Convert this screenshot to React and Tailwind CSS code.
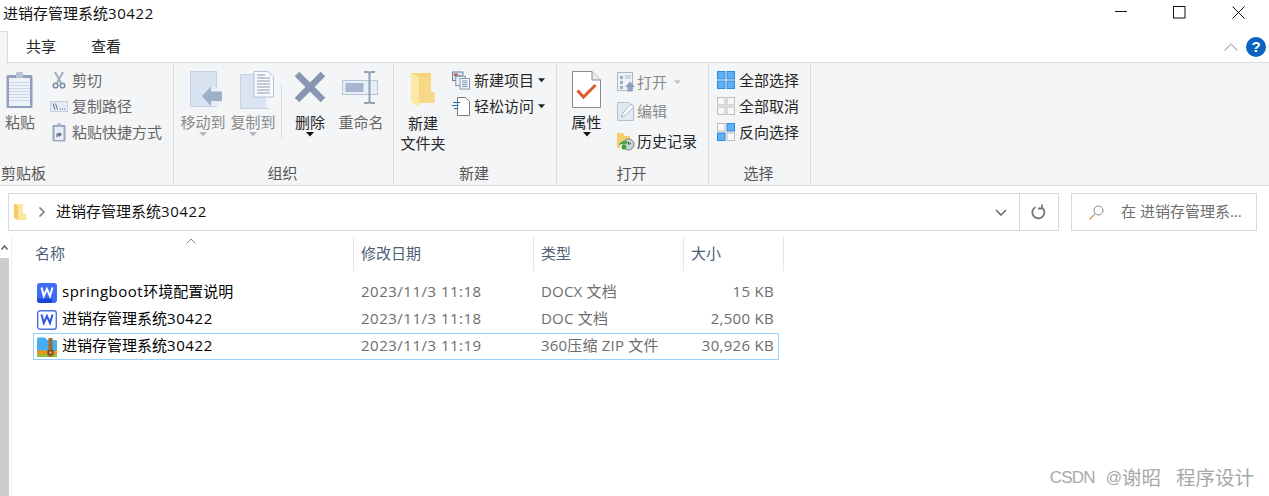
import React from "react";

const font = { fontFamily: '"Open Sans","Noto Sans CJK SC",sans-serif' };

const Caret = ({ c = "#222", w = 8 }) => (
  <svg width={w} height="5" viewBox="0 0 8 5" className="shrink-0"><path d="M0 0H8L4 4.5Z" fill={c} /></svg>
);

const BigBtn = ({ w, icon, label, dark, caret, gray, ml = 0, iconMl = 0 }) => (
  <div className="flex flex-col items-center shrink-0" style={{ width: w, marginLeft: ml }}>
    <div className="h-[40px] flex items-start justify-center" style={{ marginLeft: iconMl }}>{icon}</div>
    <div className={"h-[22px] leading-[22px] whitespace-nowrap " + (dark ? "text-[#262626]" : gray ? "text-[#8a8a8a]" : "text-[#666]")}>{label}</div>
    {caret && <div className="-mt-[1px]"><Caret c={dark ? "#111" : "#b5b8bd"} /></div>}
  </div>
);

const SmallBtn = ({ icon, label, h = 26, gap = 4, iw = 18, cls = "text-[#666]", extra }) => (
  <div className="flex items-center shrink-0" style={{ height: h }}>
    <div className="flex items-center justify-center shrink-0" style={{ width: iw, marginRight: gap }}>{icon}</div>
    <span className={"whitespace-nowrap leading-none " + cls}>{label}</span>
    {extra}
  </div>
);

const Group = ({ w, label, children, left }) => (
  <div className="flex flex-col shrink-0 border-r border-[#dcdddf] h-full" style={{ width: w }}>
    <div className="flex-1 flex items-start pt-[8px] min-h-0">{children}</div>
    <div className={"h-[22px] leading-[20px] text-[#555] " + (left ? "pl-[1px]" : "text-center pr-[2px]")}>{label}</div>
  </div>
);

const PasteIcon = () => (
  <svg width="30" height="38" viewBox="0 0 30 38">
    <rect x="1.5" y="4" width="26" height="33" rx="1.5" fill="#8fa1bd" />
    <rect x="4" y="7" width="21" height="28" fill="#edf1f8" />
    {[11, 14, 17, 20, 23, 26, 29].map((y) => <rect key={y} x="4" y={y} width="21" height="1" fill="#cdd6e6" />)}
    <rect x="11" y="1" width="7" height="6" rx="1" fill="#b9c3d4" />
  </svg>
);
const Scissors = () => (
  <svg width="14" height="18" viewBox="0 0 14 18" fill="none">
    <path d="M3 1L9 12M11 1L5 12" stroke="#a2adbf" strokeWidth="2" />
    <circle cx="3.5" cy="14.5" r="2.3" stroke="#7e8ea8" strokeWidth="1.6" />
    <circle cx="10.5" cy="14.5" r="2.3" stroke="#7e8ea8" strokeWidth="1.6" />
  </svg>
);
const PathIcon = () => (
  <svg width="18" height="11" viewBox="0 0 18 11">
    <rect x="0.5" y="0.5" width="17" height="10" fill="#e6ebf5" stroke="#c6cfdf" />
    <path d="M3 2.5L5 8.5M5.5 2.5L7.5 8.5" stroke="#5d6f8e" />
    <path d="M10 8h1M12 8h1M14 8h1" stroke="#5d6f8e" />
  </svg>
);
const ShortcutIcon = () => (
  <svg width="14" height="19" viewBox="0 0 14 19">
    <rect x="0.5" y="2" width="13" height="16.5" fill="#9aa8bf" />
    <rect x="2.5" y="4" width="9" height="13" fill="#e9edf5" />
    <rect x="5" y="0.5" width="4" height="3" fill="#a9b5c8" />
    <path d="M4.5 14V10.5H7V9L10 11.5L7 14V12.5H6V14Z" fill="#5f6f8b" />
  </svg>
);
const MoveIcon = () => (
  <svg width="33" height="37" viewBox="0 0 33 37">
    <rect x="0.5" y="0.5" width="26" height="35" fill="#dae3f1" stroke="#c5d1e4" />
    <rect x="22" y="16" width="8" height="19" fill="#e8eef7" />
    <path d="M12 25L21 15.5V20.5H32V30H21V35Z" fill="#9dafc9" />
  </svg>
);
const CopyToIcon = () => (
  <svg width="36" height="39" viewBox="0 0 36 39">
    <rect x="0.5" y="3.5" width="28" height="34" fill="#dae3f1" stroke="#c8d4e6" />
    <path d="M26 20H29V37H26Z" fill="#eef2f8" />
    <path d="M14 0.5H28L33.5 6V26H14Z" fill="#f7f9fc" stroke="#b5c1d4" />
    <path d="M17 4h8M17 7h13M17 10h13M17 13h13M17 16h13M17 19h13M17 22h13" stroke="#8d9cb3" />
  </svg>
);
const DeleteIcon = () => (
  <svg width="32" height="32" viewBox="0 0 32 32"><path d="M3 3L29 29M29 3L3 29" stroke="#8896b0" strokeWidth="6.5" /></svg>
);
const RenameIcon = () => (
  <svg width="38" height="34" viewBox="0 0 38 34">
    <rect x="0.5" y="9.5" width="35" height="14" fill="#e8eef8" stroke="#b7c4da" />
    <rect x="3.5" y="12" width="18" height="9" fill="#a7b6cf" />
    <path d="M22 1h3.5q2 0 2 2v27q0 2 2 2h3.500M33 1h-3.500q-2 0-2 2M27.500 30q0 2-2 2H22" stroke="#92a1ba" strokeWidth="2" fill="none" />
  </svg>
);
const FolderBig = () => (
  <svg width="24" height="35" viewBox="0 0 24 35">
    <path d="M0 0H20V18L23.500 20V30H8Z" fill="#f6d57a" />
    <path d="M8 4H20V18L23.500 20V30H8Z" fill="#f7d887" />
    <path d="M0 0L8 4V34L0 29Z" fill="#fde9a6" />
  </svg>
);
const NewItem = () => (
  <svg width="19" height="19" viewBox="0 0 19 19">
    <rect x="0.500" y="0.500" width="11" height="9" fill="#dfe7f3" stroke="#5f7ea6" />
    <rect x="2" y="2" width="4" height="3" fill="#c25d4a" />
    <rect x="6" y="4" width="4" height="3" fill="#6aa36a" />
    <rect x="4" y="5" width="10" height="10" fill="#eef2f8" stroke="#7d8fa8" />
    <rect x="8.500" y="7.500" width="10" height="11" fill="#fff" stroke="#7d8fa8" />
    <path d="M10.500 10h6M10.500 12h6M10.500 14h6M10.500 16h6" stroke="#6f89b3" />
  </svg>
);
const EasyAccess = () => (
  <svg width="18" height="19" viewBox="0 0 18 19">
    <path d="M5.500 0.500H13.500L17.500 4.500V18.500H5.500Z" fill="#fff" stroke="#7a7a7a" />
    <path d="M1 5.500H8M0 8.500H6.500M2 11.500H6" stroke="#1d6fb8" strokeWidth="1.200" />
  </svg>
);
const Props = () => (
  <svg width="29" height="37" viewBox="0 0 29 37">
    <path d="M0.500 0.500H20L28.500 9V36.500H0.500Z" fill="#fff" stroke="#8a8a8a" />
    <path d="M20 0.500V9H28.500" fill="#eee" stroke="#8a8a8a" />
    <path d="M5.500 19.500L11.500 26L23.500 14" stroke="#e0592a" strokeWidth="3" fill="none" />
  </svg>
);
const OpenIcon = () => (
  <svg width="18" height="20" viewBox="0 0 18 20">
    <rect x="0.500" y="0.500" width="15" height="18" fill="#eef1f6" stroke="#a9b5c8" />
    <path d="M3 4h3v3h-3zM3 9h3v3h-3zM3 14h3v3h-3z" fill="#9eacc3" />
    <path d="M8 4h6M8 6h6" stroke="#a9b5c8" />
    <path d="M8 15L13 9.500L18 15H15.500V19.500H10.500V15Z" fill="#8da0bd" />
  </svg>
);
const EditIcon = () => (
  <svg width="18" height="19" viewBox="0 0 18 19">
    <path d="M0.500 0.500H12L16.500 5V18.500H0.500Z" fill="#e3e9f3" stroke="#b3bfd2" />
    <path d="M4 15L6 11L14 2L17 4.500L8 13.500Z" fill="#fff" stroke="#a8b5ca" />
  </svg>
);
const HistoryIcon = () => (
  <svg width="18" height="19" viewBox="0 0 18 19">
    <path d="M0 1H6L8 4H13V12H3V17L0 15Z" fill="#f4cf6e" />
    <circle cx="11.500" cy="12.500" r="5.500" fill="#cfd2d6" stroke="#777" />
    <path d="M11.500 9.500V12.500L14 11" stroke="#555" fill="none" />
    <path d="M2 13.500C3 9.500 6 9 8 9.500L8.500 8L11 11L7.500 12.500L7.500 11.500C6 11.500 4 12 2 13.500Z" fill="#3aa13a" />
    <circle cx="7" cy="15" r="2.500" fill="#3aa13a" />
  </svg>
);
const Grid = ({ a, b, c, d }) => {
  const s = (on) => (on ? { fill: "#5fb1ef", stroke: "#2c8be0" } : { fill: "#f7f8fa", stroke: "#bdbdbd" });
  return (
    <svg width="18" height="18" viewBox="0 0 18 18">
      <rect x="0.500" y="0.500" width="7.500" height="7.500" {...s(a)} />
      <rect x="10" y="0.500" width="7.500" height="7.500" {...s(b)} />
      <rect x="0.500" y="10" width="7.500" height="7.500" {...s(c)} />
      <rect x="10" y="10" width="7.500" height="7.500" {...s(d)} />
    </svg>
  );
};
const Wps = ({ solid }) => (
  <svg width="20" height="20" viewBox="0 0 20 20">
    {solid ? (
      <>
        <rect width="20" height="20" rx="3" fill="#3d6cf5" />
        <path d="M4 15.500H15V20H3Q0 20 0 17V15.500Z" fill="#1a45d8" />
      </>
    ) : (
      <rect x="0.700" y="0.700" width="18.600" height="18.600" rx="2.500" fill="#fff" stroke="#4a72ee" strokeWidth="1.400" />
    )}
    <path d="M4.500 4.500L6.800 13L9.900 6L13 13L15.500 4.500" fill="none" stroke={solid ? "#fff" : "#3156e0"} strokeWidth="2" />
  </svg>
);
const Zip = () => (
  <svg width="20" height="20" viewBox="0 0 20 20">
    <path d="M0 2Q0 0.500 1.500 0.500H8L10 3H18.500Q20 3 20 4.500V14H0Z" fill="#46aef2" />
    <rect y="13.500" width="20" height="3.500" fill="#f0921e" />
    <rect y="17" width="20" height="3" fill="#8dbf3e" />
    <rect x="11.500" y="1" width="4" height="19" fill="#a5692a" />
    <rect x="10.500" y="13" width="6" height="5" fill="#7a4a1a" />
    <rect x="12" y="14.500" width="3" height="2" fill="#e0a85a" />
  </svg>
);

const Column = ({ w, label, sep = true, pl = 7 }) => (
  <div className={"h-[34px] pb-[2px] flex items-center text-[#4c607a] shrink-0 " + (sep ? "border-r border-[#e5e5e5]" : "")} style={{ width: w, paddingLeft: pl }}>{label}</div>
);

const Name = ({ pre, cjk, post }) => (
  <>
    {pre && <span className="tracking-[0.500px]">{pre}</span>}
    {cjk}
    {post && <span className="tracking-[0.600px]">{post}</span>}
  </>
);

const Row = ({ icon, name, date, type, size, selected }) => (
  <div className={"h-[27px] w-[746px] ml-[33px] flex items-center text-[15px] border " + (selected ? "border-[#99d1ff]" : "border-transparent")}>
    <div className="w-[28px] pl-[3px] flex items-center shrink-0">{icon}</div>
    <div className="w-[299px] pb-[2px] text-black whitespace-nowrap shrink-0">{name}</div>
    <div className="w-[180px] pb-[2px] text-[#6d6d6d] whitespace-nowrap shrink-0 tracking-[0.500px]">{date}</div>
    <div className="w-[130px] pb-[2px] text-[#6d6d6d] whitespace-nowrap shrink-0 tracking-[0.200px]">{type}</div>
    <div className="w-[103px] pb-[2px] text-[#6d6d6d] whitespace-nowrap text-right shrink-0 tracking-[0.300px]">{size}</div>
  </div>
);

export default function App() {
  return (
    <div className="w-[1269px] h-[496px] bg-white relative overflow-hidden text-[15px] flex flex-col" style={font}>
      {/* title bar */}
      <div className="h-[31px] flex items-start shrink-0">
        <div className="pl-[3px] pt-[1px] text-[15px] leading-[24px] text-[#111] flex-1"><Name cjk="进销存管理系统" post="30422" /></div>
        <div className="flex pt-[6px] pr-[24px] gap-[46px] items-start">
          <svg width="12" height="12" viewBox="0 0 12 12"><path d="M0 5.500H12" stroke="#111" /></svg>
          <svg width="13" height="13" viewBox="0 0 13 13"><rect x="0.500" y="0.500" width="11.500" height="11.500" fill="none" stroke="#111" /></svg>
          <svg width="13" height="13" viewBox="0 0 13 13"><path d="M0.500 0.500L12.500 12.500M12.500 0.500L0.500 12.500" stroke="#111" /></svg>
        </div>
      </div>
      {/* tabs */}
      <div className="h-[32px] flex items-center shrink-0 border-b border-[#dadbdc] relative">
        <div className="w-[8px] h-[32px] bg-[#f5f6f7] border-t border-r border-[#dadbdc] shrink-0" />
        <div className="ml-[18px] text-[#222] leading-none">共享</div>
        <div className="ml-[35px] text-[#222] leading-none">查看</div>
        <div className="flex-1" />
        <svg width="14" height="8" viewBox="0 0 14 8" className="mr-[8px]"><path d="M0.500 7.500L7 1L13.500 7.500" fill="none" stroke="#b5b5b5" strokeWidth="1.200" /></svg>
        <div className="w-[20px] h-[20px] mr-[3px] rounded-full bg-[#0a63c0] text-white font-bold text-[15px] leading-[20px] text-center" style={{ fontFamily: '"Liberation Sans",sans-serif' }}>?</div>
      </div>
      {/* ribbon */}
      <div className="h-[123px] bg-[#f4f5f7] border-b border-[#dadbdc] shrink-0 flex">
        <Group w={174} label="剪贴板" left>
          <BigBtn w={40} icon={<PasteIcon />} label="粘贴" />
          <div className="ml-[10px] -mt-[4px] flex flex-col">
            <SmallBtn icon={<Scissors />} label="剪切" />
            <SmallBtn icon={<PathIcon />} label="复制路径" />
            <SmallBtn icon={<ShortcutIcon />} label="粘贴快捷方式" />
          </div>
        </Group>
        <Group w={220} label="组织">
          <BigBtn w={50} ml={4} iconMl={6} icon={<MoveIcon />} label="移动到" gray caret />
          <BigBtn w={50} iconMl={10} icon={<CopyToIcon />} label="复制到" gray caret />
          <div className="w-px h-[54px] bg-[#dcdddf] mt-[13px] ml-[3px] shrink-0" />
          <BigBtn w={56} icon={<DeleteIcon />} label="删除" dark caret />
          <BigBtn w={46} icon={<RenameIcon />} label="重命名" />
        </Group>
        <Group w={163} label="新建">
          <div className="w-[58px] shrink-0 flex flex-col items-center">
            <div className="mt-[2px] -ml-[1px]"><FolderBig /></div>
            <div className="mt-[5px] leading-[20px] text-center text-[#262626]">新建<br />文件夹</div>
          </div>
          <div className="-mt-[4px] flex flex-col">
            <SmallBtn icon={<NewItem />} label="新建项目" cls="text-[#262626]" extra={<span className="ml-[4px]"><Caret w={7} /></span>} />
            <SmallBtn icon={<EasyAccess />} label="轻松访问" cls="text-[#262626]" extra={<span className="ml-[4px]"><Caret w={7} /></span>} />
          </div>
        </Group>
        <Group w={152} label="打开">
          <BigBtn w={59} icon={<Props />} label="属性" dark caret />
          <div className="-mt-[4px] flex flex-col ml-[1px]">
            <SmallBtn h={30} icon={<OpenIcon />} label="打开" cls="text-[#8a8a8a]" gap={2} extra={<span className="ml-[7px]"><Caret w={7} c="#c2c5ca" /></span>} />
            <SmallBtn h={29} icon={<EditIcon />} label="编辑" cls="text-[#8a8a8a]" gap={2} />
            <SmallBtn h={30} icon={<HistoryIcon />} label="历史记录" cls="text-[#262626]" gap={2} />
          </div>
        </Group>
        <Group w={102} label="选择">
          <div className="-mt-[4px] ml-[8px] flex flex-col">
            <SmallBtn icon={<Grid a b c d />} label="全部选择" cls="text-[#262626]" />
            <SmallBtn icon={<Grid />} label="全部取消" cls="text-[#262626]" />
            <SmallBtn icon={<Grid b c />} label="反向选择" cls="text-[#262626]" />
          </div>
        </Group>
      </div>
      {/* address */}
      <div className="h-[38px] mt-[7px] flex shrink-0">
        <div className="ml-[8px] w-[1011px] border-y border-l border-[#d9d9d9] flex items-center">
          <svg width="13" height="17" viewBox="0 0 13 17" className="ml-[5px]">
            <path d="M0 0H9V10H12.500V16H4L0 14Z" fill="#fbe69c" />
            <path d="M0 0H1L4 2V16L0 14Z" fill="#f5c964" />
          </svg>
          <svg width="8" height="10" viewBox="0 0 8 10" className="ml-[11px]"><path d="M1.500 0.500L6 5L1.500 9.500" fill="none" stroke="#777" strokeWidth="1.500" /></svg>
          <span className="ml-[10px] pb-[2px] text-[15px] text-[#111] whitespace-nowrap"><Name cjk="进销存管理系统" post="30422" /></span>
          <div className="flex-1" />
          <svg width="12" height="7" viewBox="0 0 12 7" className="mr-[12px]"><path d="M1 1L6 6L11 1" fill="none" stroke="#666" strokeWidth="1.500" /></svg>
        </div>
        <div className="w-[40px] border border-[#d9d9d9] flex items-center justify-center">
          <svg width="16" height="16" viewBox="0 0 16 16"><path d="M11 3.500A6 6 0 1 1 4.500 3M11 0.500V4.500H7" fill="none" stroke="#777" strokeWidth="1.800" /></svg>
        </div>
        <div className="ml-[12px] w-[186px] border border-[#d9d9d9] flex items-center pl-[17px] text-[#6d6d6d] whitespace-nowrap">
          <svg width="15" height="15" viewBox="0 0 15 15"><circle cx="9.500" cy="5.500" r="4.500" fill="none" stroke="#888" /><path d="M6 9L0.500 14.500" stroke="#c89a6a" strokeWidth="1.300" /></svg>
          <span className="ml-[17px] pb-[2px]">在 进销存管理系...</span>
        </div>
      </div>
      {/* body */}
      <div className="flex flex-1 min-h-0 mt-[6px]">
        <div className="w-[9px] shrink-0 flex flex-col">
          <div className="h-[21px] flex items-center justify-center">
            <svg width="7" height="5" viewBox="0 0 7 5"><path d="M0.500 4.500L3.500 1L6.500 4.500" fill="none" stroke="#555" strokeWidth="1.300" /></svg>
          </div>
          <div className="flex-1 bg-[#cdcdcd]" />
        </div>
        <div className="w-px bg-[#eeeeee] ml-[2px] shrink-0" />
        <div className="flex-1 relative min-w-0">
          <div className="flex ml-[17px] h-[34px]">
            <Column w={325} label="名称" pl={6} />
            <Column w={180} label="修改日期" />
            <Column w={150} label="类型" />
            <Column w={100} label="大小" />
          </div>
          <svg width="10" height="6" viewBox="0 0 10 6" className="absolute left-[174px] top-[1px]"><path d="M0.500 5.500L5 1L9.500 5.500" fill="none" stroke="#888" /></svg>
          <div className="mt-[8px] -ml-[12px]">
            <Row icon={<Wps solid />} name={<Name pre="springboot" cjk="环境配置说明" />} date="2023/11/3 11:18" type="DOCX 文档" size="15 KB" />
            <Row icon={<Wps />} name={<Name cjk="进销存管理系统" post="30422" />} date="2023/11/3 11:18" type="DOC 文档" size="2,500 KB" />
            <Row icon={<Zip />} name={<Name cjk="进销存管理系统" post="30422" />} date="2023/11/3 11:19" type="360压缩 ZIP 文件" size="30,926 KB" selected />
          </div>
        </div>
      </div>
      <div className="absolute right-[15px] bottom-[5px] h-[26px] flex items-center text-[19.500px] leading-[26px] text-[#a8a8a8] whitespace-nowrap" style={{ fontFamily: '"Liberation Sans","Noto Sans CJK SC",sans-serif' }}>
        <span className="text-[17px] tracking-[-0.800px]">CSDN</span>
        <span className="ml-[11px] text-[16px]">@</span>
        <span>谢昭</span>
        <span className="ml-[15px]">程序设计</span>
      </div>
    </div>
  );
}
